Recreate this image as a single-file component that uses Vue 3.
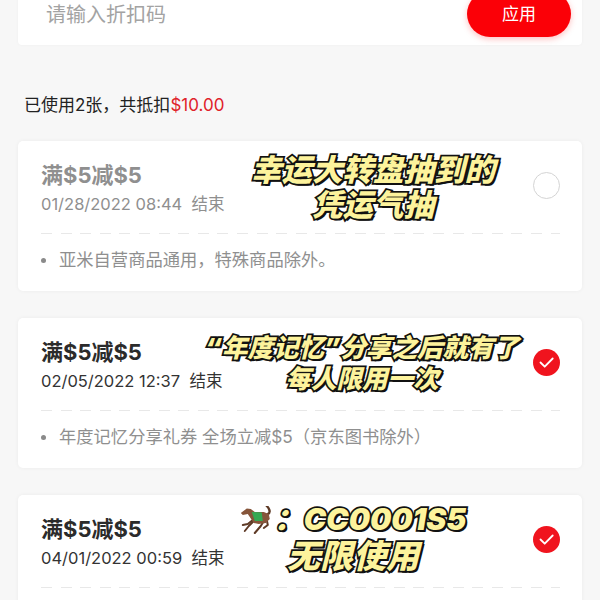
<script setup>
import { ref } from 'vue'

const code = ref('')

const coupons = [
  {
    title: '满$5减$5',
    date: '01/28/2022 08:44',
    rule: '亚米自营商品通用，特殊商品除外。',
    checked: false,
    note: ['幸运大转盘抽到的', '凭运气抽'],
    noteClass: 'note-one'
  },
  {
    title: '满$5减$5',
    date: '02/05/2022 12:37',
    rule: '年度记忆分享礼券 全场立减$5（京东图书除外）',
    checked: true,
    note: ['“年度记忆”分享之后就有了', '每人限用一次'],
    noteClass: 'note-two'
  },
  {
    title: '满$5减$5',
    date: '04/01/2022 00:59',
    rule: '',
    checked: true,
    note: ['：CC0001S5', '无限使用'],
    noteClass: 'note-three',
    horse: true
  }
]
</script>

<template>
  <div class="page">
    <div class="code-card">
      <input v-model="code" class="code-input" type="text" placeholder="请输入折扣码" />
      <button class="apply-btn">应用</button>
    </div>

    <div class="summary">已使用2张，共抵扣<span class="amount">$10.00</span></div>

    <div
      v-for="item in coupons"
      :key="item.date"
      class="coupon"
      :class="{ unused: !item.checked }"
    >
      <div class="head">
        <div class="info">
          <div class="title">{{ item.title }}</div>
          <div class="date">{{ item.date }}&nbsp;&nbsp;结束</div>
        </div>
        <svg v-if="item.checked" class="check" viewBox="0 0 27 27">
          <circle cx="13.5" cy="13.5" r="13.5" fill="#f0141e" />
          <path d="M7.5 13.5l4.2 4.2 8-8.2" fill="none" stroke="#fff" stroke-width="1.8" stroke-linecap="round" stroke-linejoin="round" />
        </svg>
        <span v-else class="check-empty"></span>
      </div>
      <div class="divider"></div>
      <div v-if="item.rule" class="rule">
        <span class="dot"></span>
        <span>{{ item.rule }}</span>
      </div>

      <div class="note" :class="item.noteClass">
        <div v-for="line in item.note" :key="line" class="note-line">
          <svg v-if="item.horse && line === item.note[0]" class="horse" viewBox="0 0 33 28">
            <g fill="none" stroke="#5e3a26" stroke-width="2" stroke-linecap="round" stroke-linejoin="round">
              <path d="M13 14L8 18 3 19" />
              <path d="M14 15L9 20 5 25" />
              <path d="M24 15L21 20 15 27" />
              <path d="M27 14L28 19 24 22" />
              <path d="M28 8C31 7 30 3 27 0" stroke-width="2.4" />
            </g>
            <path d="M1 7L7 2.5 11 3 15 6 24 6 29 8 30 13 26 17 19 18 14 17 10 11 8 8 3 9z" fill="#86553a" />
            <path d="M12 6L22 6.5 23 15 15 15z" fill="#35a853" />
          </svg>
          <span>{{ line }}</span>
        </div>
      </div>
    </div>
  </div>
</template>

<style scoped>
.page {
  height: 600px;
  overflow: hidden;
  box-sizing: border-box;
  padding: 0 18px;
  background: #f7f7f7;
  color: #222;
  font-family: Inter, "Noto Sans CJK SC", sans-serif;
}

/* 折扣码输入 */
.code-card {
  display: flex;
  align-items: center;
  box-sizing: border-box;
  height: 54px;
  margin-top: -9px;
  padding: 0 11px 8px 29px;
  background: #fff;
  border-radius: 4px;
  box-shadow: 0 0 3px rgba(0, 0, 0, 0.04);
}
.code-input {
  flex: 1;
  min-width: 0;
  margin: 0 0 2px -3px;
  border: none;
  outline: none;
  background: transparent;
  font: 20px "Noto Sans CJK SC", sans-serif;
  color: #333;
}
.code-input::placeholder {
  color: #a3a3a3;
}
.apply-btn {
  width: 104px;
  height: 46px;
  flex-shrink: 0;
  padding: 0 0 3px;
  border: none;
  border-radius: 23px;
  background: #fb0007;
  color: #fff;
  font: 17px "Noto Sans CJK SC", sans-serif;
  box-shadow: 0 2px 6px rgba(251, 0, 7, 0.25);
}

.summary {
  margin: 48px 0 24px 6px;
  font-size: 17px;
  line-height: 24px;
}
.amount {
  color: #e0222a;
}

/* 优惠券 */
.coupon {
  position: relative;
  box-sizing: border-box;
  height: 150px;
  margin-bottom: 27px;
  padding: 20px 22px 0 23px;
  background: #fff;
  border-radius: 5px;
  box-shadow: 0 0 4px rgba(0, 0, 0, 0.05);
}
.head {
  display: flex;
  justify-content: space-between;
  align-items: flex-start;
}
.title {
  font-size: 22px;
  line-height: 28px;
  font-weight: 700;
  color: #2b2b2b;
}
.date {
  margin-top: 4px;
  font-size: 16.5px;
  line-height: 22px;
  color: #333;
}
.unused .title,
.unused .date {
  color: #8f8f8f;
}
.check,
.check-empty {
  width: 27px;
  height: 27px;
  margin-top: 11px;
  flex-shrink: 0;
}
.check-empty {
  box-sizing: border-box;
  border: 1px solid #d4d4d4;
  border-radius: 50%;
}
.divider {
  height: 1px;
  margin-top: 18px;
  background: repeating-linear-gradient(90deg, #e8e8e8 0 11px, transparent 11px 19.6px);
}
.rule {
  display: flex;
  align-items: center;
  margin-top: 14px;
  font-size: 17.3px;
  line-height: 24px;
  color: #8f8f8f;
}
.dot {
  width: 5px;
  height: 5px;
  margin-right: 13px;
  border-radius: 50%;
  background: #8a8a8a;
}

/* 图上的黄色批注 */
.note {
  position: absolute;
  transform: translateX(-50%);
  text-align: center;
  white-space: nowrap;
  font-family: Inter, "Noto Sans CJK SC", sans-serif;
  font-weight: 900;
  font-style: italic;
  color: #fdf39c;
  -webkit-text-stroke: 3.5px #111;
  paint-order: stroke fill;
  text-shadow: 2px 2px 0 #111;
}
.note-line {
  display: flex;
  justify-content: center;
  align-items: center;
}
.note-one {
  left: 355px;
  top: 11px;
  font-size: 30.5px;
  line-height: 35px;
}
.note-two {
  left: 344px;
  top: 14px;
  font-size: 25.5px;
  line-height: 31px;
}
.note-three {
  left: 335px;
  top: 6px;
  font-size: 33px;
  line-height: 37px;
}
.note-three .note-line:first-child {
  font-size: 30px;
}
.horse {
  width: 33px;
  height: 28px;
  margin-right: 1px;
}
</style>
